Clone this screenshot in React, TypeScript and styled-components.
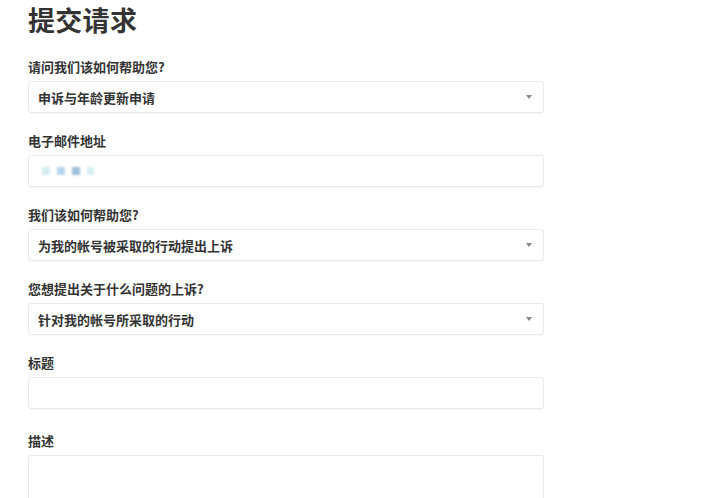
import styled, { createGlobalStyle } from "styled-components";

const GlobalStyle = createGlobalStyle`
  html, body {
    margin: 0;
    padding: 0;
    background: #fff;
  }
  body {
    font-family: "Noto Sans CJK SC", "Noto Sans", "Liberation Sans", sans-serif;
    color: #333;
  }
`;

type Field = {
  id: number;
  label: string;
  kind: "select" | "input" | "email" | "textarea";
  value?: string;
};

const fields: Field[] = [
  { id: 0, label: "请问我们该如何帮助您?", kind: "select", value: "申诉与年龄更新申请" },
  { id: 1, label: "电子邮件地址", kind: "email" },
  { id: 2, label: "我们该如何帮助您?", kind: "select", value: "为我的帐号被采取的行动提出上诉" },
  { id: 3, label: "您想提出关于什么问题的上诉?", kind: "select", value: "针对我的帐号所采取的行动" },
  { id: 4, label: "标题", kind: "input" },
  { id: 5, label: "描述", kind: "textarea" },
];

const App = () => {
  return (
    <Page>
      <GlobalStyle />
      <Title>提交请求</Title>
      <Form>
        {fields.map((field) => (
          <FieldGroup key={field.id} $wide={field.kind === "textarea"}>
            <Label>{field.label}</Label>
            {field.kind === "select" && (
              <Box>
                <Value>{field.value}</Value>
                <Caret />
              </Box>
            )}
            {field.kind === "email" && (
              <Box>
                <Blurred>
                  <Blob $color="#d3eef4" $w={8} />
                  <Blob $color="#b7d5e8" $w={8} />
                  <Blob $color="#9fbfd6" $w={8} />
                  <Blob $color="#d6f0f6" $w={7} />
                </Blurred>
              </Box>
            )}
            {field.kind === "input" && <Box />}
            {field.kind === "textarea" && <Box $tall />}
          </FieldGroup>
        ))}
      </Form>
    </Page>
  );
};

export default App;

const Page = styled.div`
  padding: 0 28px;
  height: 498px;
  overflow: hidden;
`;

const Title = styled.h1`
  margin: 0;
  font-size: 27px;
  line-height: 40px;
  font-weight: 700;
  color: #333;
  letter-spacing: 0.3px;
`;

const Form = styled.div`
  display: flex;
  flex-direction: column;
  width: 516px;
  margin-top: 18px;
`;

const FieldGroup = styled.div<{ $wide?: boolean }>`
  display: flex;
  flex-direction: column;
  gap: 5px;
  margin-bottom: 19px;
  margin-top: ${({ $wide }) => ($wide ? "4px" : "0")};
`;

const Label = styled.label`
  font-size: 13px;
  line-height: 18px;
  font-weight: 700;
  color: #333;
`;

const Box = styled.div<{ $tall?: boolean }>`
  position: relative;
  display: flex;
  align-items: center;
  height: ${({ $tall }) => ($tall ? "100px" : "32px")};
  box-sizing: border-box;
  border: 1px solid #e9e9e9;
  border-radius: 3px;
  background: #fff;
  box-shadow: 0 1px 1px rgba(0, 0, 0, 0.03);
  padding: 0 9px;
`;

const Value = styled.span`
  font-size: 13px;
  font-weight: 700;
  color: #333;
`;

const Caret = styled.span`
  position: absolute;
  right: 11px;
  top: 13px;
  width: 0;
  height: 0;
  border-left: 3px solid transparent;
  border-right: 3px solid transparent;
  border-top: 4px solid #888;
`;

const Blurred = styled.div`
  display: flex;
  gap: 7px;
  margin-left: 4px;
  filter: blur(1px);
`;

const Blob = styled.span<{ $color: string; $w: number }>`
  display: block;
  width: ${({ $w }) => $w}px;
  height: 8px;
  background: ${({ $color }) => $color};
`;
